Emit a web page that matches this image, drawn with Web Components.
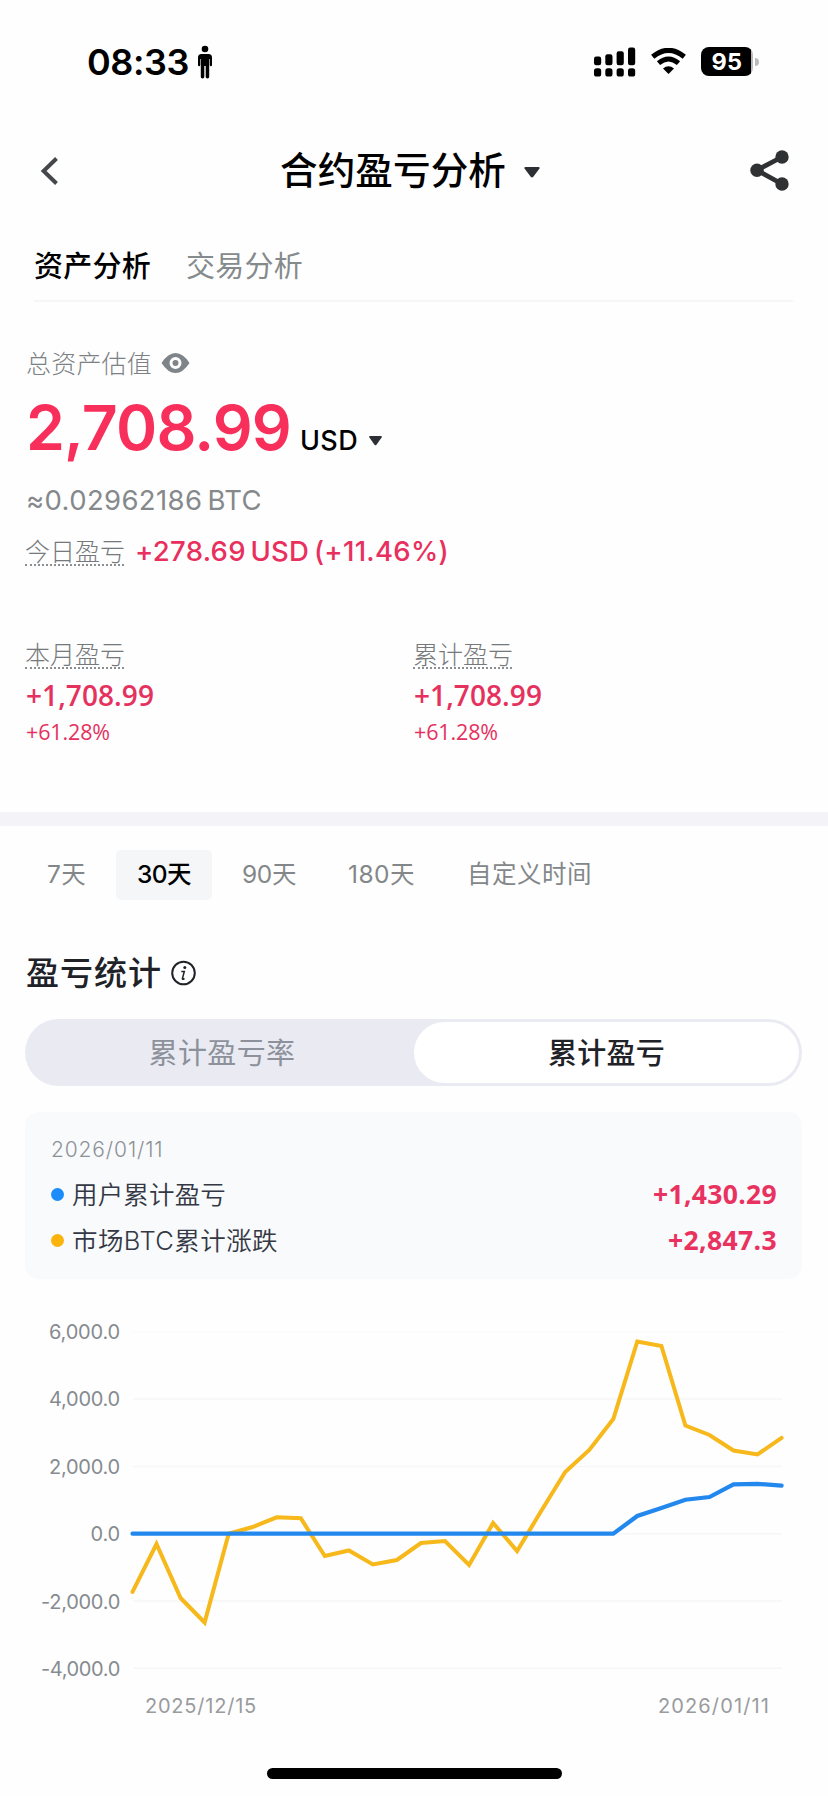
<!DOCTYPE html>
<html lang="zh-CN">
<head>
<meta charset="utf-8">
<title>合约盈亏分析</title>
<style>
html,body{margin:0;padding:0;background:#fefefe}
body{width:828px;height:1796px;overflow:hidden;font-family:Inter,"Noto Sans CJK SC",sans-serif;color:#000}
</style>
</head>
<body>
<pnl-app></pnl-app>
<script>
const define = (name, html, ready) => customElements.define(name, class extends HTMLElement {
  constructor() {
    super();
    const t = document.createElement('template');
    t.innerHTML = html;
    this.attachShadow({ mode: 'open' }).append(t.content.cloneNode(true));
  }
  connectedCallback() { if (ready) ready(this); }
});

// A single line of text; `fit` sets its tracking so that the line takes that many pixels.
define('ui-text', `<style>
:host{display:block;white-space:nowrap;flex:none}
span{display:inline-block;white-space:nowrap}
</style><span><slot></slot></span>`, el => {
  const s = el.style;
  if (el.hasAttribute('size')) s.fontSize = el.getAttribute('size') + 'px';
  if (el.hasAttribute('weight')) s.fontWeight = el.getAttribute('weight');
  if (el.hasAttribute('color')) s.color = el.getAttribute('color');
  if (el.hasAttribute('num')) s.fontFamily = '"Open Sans","Noto Sans CJK SC",sans-serif';
  const fit = parseFloat(el.getAttribute('fit'));
  const count = [...el.textContent].length;
  if (fit && count) {
    const span = el.shadowRoot.querySelector('span');
    const w = span.getBoundingClientRect().width;
    span.style.letterSpacing = (fit - w) / count + 'px';
    s.width = fit + 'px';
  }
});

define('status-bar', `<style>
:host{display:flex;height:124px;align-items:center;padding:0 69px 0 87px;box-sizing:border-box}
ui-text{line-height:36px}
svg{display:block;flex:none}
.person{margin-left:8px}
.right{margin-left:auto;display:flex;align-items:center;margin-top:-1px}
.wifi{margin-left:15px}
.batt{margin-left:15px;width:52px;height:29px;border-radius:8px;background:linear-gradient(90deg,#000 50px,#bbb 50px);display:flex;justify-content:center;align-items:center}
.tip{margin-left:2px;width:4px;height:8px;border-radius:0 4px 4px 0;background:#bbb}
</style>
<ui-text size="36" weight="600" fit="102">08:33</ui-text>
<svg class="person" width="16" height="34" viewBox="0 0 16 34"><circle cx="8" cy="4" r="3.300"/><path d="M4.500 9h7Q15 9 15 12.500V20q0 1.300-1.100 1.300T12.800 20v-6h-.6v18q0 1.400-1.700 1.400T8.700 32V21H7.300v11q0 1.400-1.800 1.400T3.800 32V14h-.6v6q0 1.300-1.100 1.300T1 20v-7.500Q1 9 4.500 9z"/></svg>
<div class="right">
<svg width="42" height="30" viewBox="0 0 42 30"><rect x="0" y="9.500" width="7.200" height="8.800" rx="2.200"/><rect x="11.300" y="7.300" width="7.200" height="11" rx="2.200"/><rect x="22.600" y="4.200" width="7.200" height="14.100" rx="2.200"/><rect x="34" y="0.500" width="7.200" height="17.800" rx="2.200"/><rect x="0" y="21.300" width="7.200" height="8.200" rx="2.600"/><rect x="11.300" y="21.300" width="7.200" height="8.200" rx="2.600"/><rect x="22.600" y="21.300" width="7.200" height="8.200" rx="2.600"/><rect x="34" y="21.300" width="7.200" height="8.200" rx="2.600"/></svg>
<svg class="wifi" width="35" height="27" viewBox="0 0 35 27"><path d="M1.700 8.800Q17.500-4.200 33.300 8.800M7.500 15.200Q17.500 6.800 27.500 15.200" fill="none" stroke="#000" stroke-width="5"/><path d="M12 20.500Q17.500 16 23 20.500L17.500 26z"/></svg>
<div class="batt"><ui-text size="23.500" weight="700" color="#fff" fit="31" style="line-height:29px">95</ui-text></div><div class="tip"></div>
</div>`);

define('nav-bar', `<style>
:host{display:grid;grid-template-columns:240px 1fr 240px;height:94px;align-items:center}
svg{display:block}
.title{display:flex;align-items:center;padding-left:40px}
.back{margin-left:40px}.caret{margin-left:18px;margin-top:2px}.share{justify-self:end;margin:-1px 39px 0 0}
ui-text{line-height:50px}
</style>
<svg class="back" width="18" height="28" viewBox="0 0 18 28"><path d="M16.500 1.500L3.600 14 16.500 26.500" fill="none" stroke="#45474a" stroke-width="4"/></svg>
<div class="title"><ui-text size="37.500" weight="500" fit="226">合约盈亏分析</ui-text>
<svg class="caret" width="16" height="11" viewBox="0 0 16 11"><path d="M1.500 0h13q1.800.3.800 1.800L9.300 9.800Q8 11 6.700 9.800L.7 1.800Q-.3.300 1.500 0z" fill="#2c2f33"/></svg></div>
<svg class="share" width="39" height="41" viewBox="0 0 39 41"><path d="M32 7L7 20.200 32 34" fill="none" stroke="#2f3133" stroke-width="4.800"/><circle cx="32" cy="7" r="6.700" fill="#2f3133"/><circle cx="7" cy="20.200" r="6.700" fill="#2f3133"/><circle cx="32" cy="34" r="6.700" fill="#2f3133"/></svg>`);

define('page-tabs', `<style>
:host{display:flex;height:84px;box-sizing:border-box;margin:0 35px 0 34px;padding-top:15px;border-bottom:2px solid #f6f6f7;align-items:center;gap:35px}
ui-text{line-height:40px}
</style>
<ui-text size="29" weight="500" fit="117">资产分析</ui-text>
<ui-text size="29" weight="400" color="#858a8c" fit="117">交易分析</ui-text>`);

define('hint-label', `<style>
:host{display:inline-block;border-bottom:2px dotted #8c8f92;flex:none}
ui-text{line-height:27px;height:27px;padding-top:1.500px;box-sizing:border-box;width:99px}
</style><ui-text size="25" weight="300" color="#76797c"><slot></slot></ui-text>`);

define('asset-overview', `<style>
:host{display:block;padding:46px 25px 68px;box-sizing:border-box;height:510px}
.row{display:flex}
svg{display:block}
.label{height:30px;line-height:30px;align-items:center}
.label ui-text{margin:2px 0 0 1px}
.label svg{margin-left:9px}
.total{margin-top:20px;height:59px;align-items:baseline;line-height:59px}
.sum{margin-left:1px}
.total svg{margin-left:11px;align-self:flex-start;margin-top:38px}
.btc{margin-top:28px;line-height:30px;word-spacing:-3px;margin-left:1px}
.today{margin-top:21px;height:30px;line-height:30px;padding-top:1px;box-sizing:border-box;word-spacing:-3px}
.cols{display:grid;grid-template-columns:388px 1fr;margin-top:74px}
.col{display:flex;flex-direction:column;align-items:flex-start;color:#e5315e}
.v{margin:11px 0 0 1px;line-height:30px}.p{margin:10px 0 0 1px;line-height:24px}
</style>
<div class="row label"><ui-text size="25" weight="300" color="#7d8184" fit="126">总资产估值</ui-text>
<svg width="29" height="20" viewBox="0 0 29 20"><path fill-rule="evenodd" d="M.5 10Q7 0 14.500 0T28.500 10Q22 20 14.500 20T.5 10zM14.500 4a6 6 0 100 12 6 6 0 000-12zM14.500 7a3 3 0 110 6 3 3 0 010-6z" fill="#7f8488"/></svg></div>
<div class="row total"><ui-text class="sum" size="62.500" weight="600" color="#f92f5b" fit="265">2,708.99</ui-text>
<ui-text size="27" weight="500" fit="58" style="margin-left:9px">USD</ui-text>
<svg width="13" height="10" viewBox="0 0 13 10"><path d="M1 0h11q1.300.3.600 1.500L7.500 8.800q-1 1-2 0L.4 1.500Q-.3.300 1 0z" fill="#2c2f33"/></svg></div>
<ui-text class="btc" size="27.500" weight="400" color="#85898c" fit="236">≈0.02962186 BTC</ui-text>
<div class="row today"><hint-label>今日盈亏</hint-label><ui-text size="27.500" weight="500" color="#e92f5d" fit="314" style="margin-left:11px;margin-top:-1px">+278.69 USD (+11.46%)</ui-text></div>
<div class="cols">
<div class="col"><hint-label>本月盈亏</hint-label><ui-text num class="v" size="28" weight="550" fit="128">+1,708.99</ui-text><ui-text num class="p" size="21.500" weight="400" fit="84">+61.28%</ui-text></div>
<div class="col"><hint-label>累计盈亏</hint-label><ui-text num class="v" size="28" weight="550" fit="128">+1,708.99</ui-text><ui-text num class="p" size="21.500" weight="400" fit="84">+61.28%</ui-text></div>
</div>`);

define('range-tabs', `<style>
:host{display:flex;gap:9px;border-top:14px solid #f4f4f8;padding:24px 0 0 26px}
div{height:50px;padding:0 21px;border-radius:5px;color:#838789;line-height:49px}
div:nth-child(n+4 of div){margin-left:1px}
.on{background:#f4f6f8;color:#000}
</style>
<div><ui-text size="24.500" fit="39">7天</ui-text></div>
<div class="on"><ui-text size="24.500" weight="500" fit="54">30天</ui-text></div>
<div><ui-text size="24.500" fit="54">90天</ui-text></div>
<div><ui-text size="24.500" fit="67">180天</ui-text></div>
<div><ui-text size="24.500" fit="125">自定义时间</ui-text></div>`);

define('section-title', `<style>
:host{display:flex;align-items:center;height:34px;margin:56px 0 0 26px;line-height:34px;color:#202228}
ui-text{width:136px;letter-spacing:1px}
svg{margin-left:9px}
</style><ui-text size="33" weight="500"><slot></slot></ui-text>
<svg width="25" height="26" viewBox="0 0 25 26"><circle cx="12.500" cy="13" r="11.300" fill="none" stroke="#202228" stroke-width="2"/><circle cx="13.800" cy="7.500" r="1.500" fill="#202228"/><path d="M10.300 11.400h3l-1.900 7.200q-.2 1 .9.600l1.200-.7" fill="none" stroke="#202228" stroke-width="1.500"/></svg>`);

define('segment-switch', `<style>
:host{display:grid;grid-template-columns:386px 385px;grid-template-rows:61px;margin:29px 26px 0 25px;height:67px;padding:3px;box-sizing:border-box;border-radius:34px;background:#eaebf2}
div{display:flex;justify-content:center;align-items:center;line-height:40px;border-radius:31px}
ui-text{margin-top:2px}
.on{background:#fff}
</style>
<div><ui-text size="29" weight="400" color="#8c919b" fit="147" style="margin-left:2px">累计盈亏率</ui-text></div>
<div class="on"><ui-text size="29" weight="500" color="#202228" fit="117">累计盈亏</ui-text></div>`);

define('legend-card', `<style>
:host{display:block;margin:26px 26px 0 25px;height:167px;box-sizing:border-box;padding:23px 25px 0 26px;background:#f8fafc;border-radius:14px;line-height:30px}
.row{display:flex;align-items:center;margin-top:14px;height:30px}
.row + .row{margin-top:16px}
i{width:13px;height:13px;border-radius:50%;margin-right:8px}
.n{margin-top:1px}
.v{margin-left:auto;margin-top:-1px}
</style>
<ui-text size="21" weight="350" color="#8d9196" fit="112.500">2026/01/11</ui-text>
<div class="row"><i style="background:#1c8cfa"></i><ui-text class="n" size="25.500" weight="350" color="#343844" fit="154">用户累计盈亏</ui-text><ui-text num class="v" size="26.500" weight="700" color="#e9325f" fit="124">+1,430.29</ui-text></div>
<div class="row"><i style="background:#fbb40b"></i><ui-text class="n" size="25.500" weight="350" color="#343844" fit="206">市场BTC累计涨跌</ui-text><ui-text num class="v" size="26.500" weight="700" color="#e9325f" fit="109">+2,847.3</ui-text></div>`);

define('pnl-chart', `<style>
:host{display:block;margin-top:38px}
.plot{display:grid;grid-template-columns:120px 708px;height:367px}
.axis{display:flex;flex-direction:column;justify-content:space-between;align-items:flex-end;line-height:30px}
.dates{display:flex;justify-content:space-between;margin-top:7px;padding:0 58px 0 145px;line-height:30px}
svg{display:block}
</style>
<div class="plot"><div class="axis">
<ui-text size="20" weight="370" color="#868b90" fit="71">6,000.0</ui-text>
<ui-text size="20" weight="370" color="#868b90" fit="71">4,000.0</ui-text>
<ui-text size="20" weight="370" color="#868b90" fit="71">2,000.0</ui-text>
<ui-text size="20" weight="370" color="#868b90" fit="29.500">0.0</ui-text>
<ui-text size="20" weight="370" color="#868b90" fit="79">-2,000.0</ui-text>
<ui-text size="20" weight="370" color="#868b90" fit="79">-4,000.0</ui-text>
</div><svg width="708" height="367" viewBox="0 0 708 367"></svg></div>
<div class="dates"><ui-text size="20" weight="370" color="#999b9e" fit="112">2025/12/15</ui-text><ui-text size="20" weight="370" color="#999b9e" fit="112">2026/01/11</ui-text></div>`, el => {
  const x = i => (12.5 + i * 24.04).toFixed(1);
  const y = v => (216.7 - v * 0.03365).toFixed(1);
  const market = [-1730,-306,-1910,-2640,0,200,487,458,-663,-499,-915,-782,-276,-217,-930,318,-514,675,1834,2487,3409,5712,5578,3216,2933,2472,2354,2847];
  const user = [...Array(21).fill(0),526,764,1010,1091,1468,1480,1430];
  const line = (data, color, w) => `<polyline fill="none" stroke="${color}" stroke-width="${w}" stroke-linecap="round" points="${data.map((v, i) => x(i) + ',' + y(v)).join(' ')}"/>`;
  const grid = [6000, 4000, 2000, 0, -2000, -4000].map(v =>
    `<path d="M13 ${y(v)}H662" stroke="${v === 6000 ? '#fbfbfb' : '#f6f6f7'}" stroke-width="1.5"/>`).join('');
  el.shadowRoot.querySelector('svg').innerHTML = grid + line(market, '#f6b81a', 4) + line(user, '#2288ee', 4.2);
});

define('home-indicator', `<style>
:host{display:block;width:295px;height:11px;border-radius:6px;background:#000;margin:47px 0 0 267px}
</style>`);

define('pnl-app', `<style>:host{display:block;width:828px;height:1796px}</style>
<status-bar></status-bar><nav-bar></nav-bar><page-tabs></page-tabs><asset-overview></asset-overview>
<range-tabs></range-tabs><section-title>盈亏统计</section-title><segment-switch></segment-switch>
<legend-card></legend-card><pnl-chart></pnl-chart><home-indicator></home-indicator>`);
</script>
</body>
</html>
